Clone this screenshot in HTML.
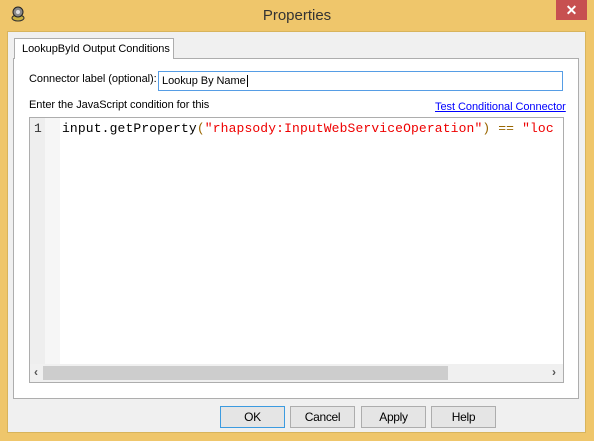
<!DOCTYPE html>
<html><head><style>
body{margin:0;width:594px;height:441px;background:#EFC66B;font-family:"Liberation Sans",sans-serif;font-size:11px;position:relative;overflow:hidden}
.a{position:absolute;white-space:nowrap}
.t{font-size:11px;letter-spacing:-0.05px}
.btn{position:absolute;top:406px;width:63px;height:20px;border:1px solid #ADADAD;background:#E5E5E5;text-align:center;line-height:20px;font-size:12px;color:#000;letter-spacing:-0.3px}
</style></head><body>
<svg class="a" style="left:10px;top:6px" width="16" height="16" viewBox="0 0 16 16"><ellipse cx="8" cy="12" rx="6" ry="3" fill="#C8B040" stroke="#333"/><circle cx="8" cy="6" r="5" fill="#888" stroke="#222"/><circle cx="8" cy="6" r="2" fill="#ddd"/></svg>
<div class="a" style="left:0;top:7px;width:594px;text-align:center;font-size:15px;color:#333">Properties</div>
<div class="a" style="left:556px;top:0;width:31px;height:20px;background:#C75050;color:#fff;text-align:center;line-height:20px;font-size:14px;font-weight:bold">✕</div>
<div class="a" style="left:7px;top:31px;width:579px;height:402px;background:#F0F0F0;border:1px solid #D8B45C;box-sizing:border-box"></div>
<div class="a" style="left:13px;top:58px;width:566px;height:341px;background:#fff;border:1px solid #ADADAD;box-sizing:border-box"></div>
<div class="a t" style="left:14px;top:38px;width:160px;height:21px;background:#fff;border:1px solid #ADADAD;border-bottom:none;box-sizing:border-box;line-height:20px;padding-left:7px">LookupById Output Conditions</div>
<div class="a t" style="left:29px;top:73px">Connector label (optional):</div>
<div class="a t" style="left:158px;top:71px;width:405px;height:20px;border:1px solid #569DE5;box-sizing:border-box;line-height:18px;padding-left:3px;background:#fff">Lookup By Name<span style="border-left:1px solid #000;margin-left:1px"></span></div>
<div class="a t" style="left:29px;top:99px">Enter the JavaScript condition for this</div>
<div class="a t" style="left:435px;top:101px;color:#0000FF;text-decoration:underline">Test Conditional Connector</div>
<div class="a" style="left:29px;top:117px;width:535px;height:266px;border:1px solid #ADADAD;box-sizing:border-box;background:#fff;overflow:hidden">
<div class="a" style="left:0;top:0;width:15px;height:264px;background:#EEE"></div>
<div class="a" style="left:15px;top:0;width:15px;height:246px;background:#F6F6F6"></div>
<div class="a" style="left:4px;top:3px;font-family:'Liberation Mono',monospace;font-size:13px;color:#333">1</div>
<div class="a" style="left:32px;top:3px;font-family:'Liberation Mono',monospace;font-size:13px;letter-spacing:0.13px;white-space:pre;color:#000">input.getProperty<span style="color:#996600">(</span><span style="color:#E00">"rhapsody:InputWebServiceOperation"</span><span style="color:#996600">) == </span><span style="color:#E00">"loc</span></div>
<div class="a" style="left:0;top:246px;width:533px;height:18px;background:#F0F0F0"></div>
<div class="a" style="left:13px;top:248px;width:405px;height:14px;background:#CDCDCD"></div>
<div class="a" style="left:4px;top:247px;font-size:12px;color:#555;font-weight:bold">‹</div>
<div class="a" style="left:522px;top:247px;font-size:12px;color:#555;font-weight:bold">›</div>
</div>
<div class="btn" style="left:220px;border-color:#3C9BE0">OK</div>
<div class="btn" style="left:290px">Cancel</div>
<div class="btn" style="left:361px">Apply</div>
<div class="btn" style="left:431px">Help</div>
</body></html>
